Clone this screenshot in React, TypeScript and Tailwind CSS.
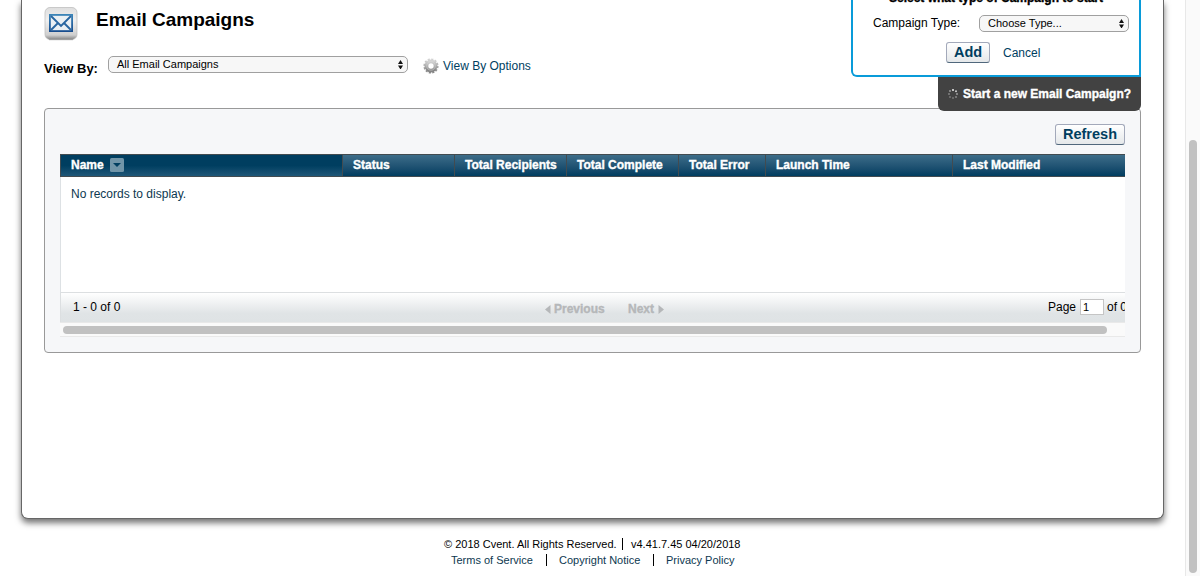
import React from 'react';

const columns = [
  { label: 'Status', box: 'w-28' },
  { label: 'Total Recipients', box: 'w-28' },
  { label: 'Total Complete', box: 'w-28' },
  { label: 'Total Error', box: 'w-[87px]' },
  { label: 'Launch Time', box: 'w-[187px]' },
  { label: 'Last Modified', box: 'w-[173px]' },
];

const heavy = 'font-bold [-webkit-text-stroke-width:0.35px]';

function Label({ children, className = '' }: { children: string; className?: string }) {
  return <span className={'block h-4 shrink-0 whitespace-nowrap leading-4 ' + className}>{children}</span>;
}

function SelectBox({ children, className }: { children: string; className: string }) {
  return (
    <div className={'flex h-[17px] shrink-0 items-center justify-between rounded-[5px] border border-[#a0a0a0] bg-[#f7f7f7] pl-2 pr-1 ' + className}>
      <Label className="-mt-px text-[11px]">{children}</Label>
      <svg width="5" height="9" viewBox="0 0 5 9"><path d="M2.5 0 5 4H0ZM0 5.5H5L2.5 9.5Z" fill="#111" /></svg>
    </div>
  );
}

function Button({ children, className }: { children: string; className: string }) {
  return (
    <button type="button" className={'flex h-[21px] justify-center rounded-[3px] border border-[#a3a9ba] border-b-[#50677c] bg-gradient-to-b from-white to-[#e5e8ea] pt-px text-[14.5px] font-bold text-[#003e5f] ' + className}>
      <Label>{children}</Label>
    </button>
  );
}

function EmailIcon() {
  return (
    <svg className="mt-[7px] shrink-0" width="34" height="34" viewBox="0 0 34 34">
      <defs>
        <linearGradient id="tile" x2="0" y2="1"><stop stopColor="#dedede" /><stop offset=".4" stopColor="#f0f0f0" /><stop offset=".86" stopColor="#cfcfcf" /><stop offset="1" stopColor="#858585" /></linearGradient>
        <linearGradient id="mail" x2="0" y2="1"><stop stopColor="#3c86b9" /><stop offset="1" stopColor="#174b8d" /></linearGradient>
      </defs>
      <rect x="1" y=".5" width="32" height="32" rx="5" fill="url(#tile)" stroke="#b9b9b9" strokeWidth=".7" />
      <path d="M5 32.7H29" stroke="#777" opacity=".5" />
      <path d="M5 7H29V25H5Z" fill="url(#mail)" />
      <path d="M6.8 8.8H27.2V23.2H6.8Z" fill="#eaf0f4" />
      <path d="m7 9 10 10L27 9M7 23l7-7M27 23l-7-7" fill="none" stroke="#2866a1" strokeWidth="1.9" />
    </svg>
  );
}

function Gear() {
  return (
    <svg width="16" height="16" viewBox="0 0 16 16" className="shrink-0">
      <defs><linearGradient id="gear" x2="0" y2="1"><stop stopColor="#d2d2d2" /><stop offset="1" stopColor="#858585" /></linearGradient></defs>
      <circle cx="8" cy="8" r="6.6" fill="none" stroke="url(#gear)" strokeWidth="2" strokeDasharray="2.1 1.356" />
      <circle cx="8" cy="8" r="4.6" fill="none" stroke="url(#gear)" strokeWidth="3.8" />
      <circle cx="8" cy="8" r="4.2" fill="none" stroke="#ddd" strokeWidth="1" opacity=".5" />
    </svg>
  );
}

function Spinner() {
  const dots = [[5, 1], [8, 2.2], [9, 5], [8, 8], [5, 9], [2, 8], [1, 5], [2, 2]];
  const shades = ['#eee', '#ccc', '#999', '#888', '#777', '#777', '#808080', '#999'];
  return <svg width="10" height="10" viewBox="0 0 10 10" className="mt-[3px] shrink-0">{dots.map(([x, y], i) => <circle key={i} cx={x} cy={y} r="1" fill={shades[i]} />)}</svg>;
}

function CampaignPopup() {
  return (
    <div className="absolute right-[22px] top-0 flex w-[290px] flex-col items-end">
      <div className="flex h-[77px] w-full flex-col overflow-hidden rounded-bl-[6px] border-2 border-t-0 border-[#099bd9] bg-white">
        <div className="-mt-[10px] flex justify-center"><Label className={'text-[12px] ' + heavy}>Select what type of Campaign to start</Label></div>
        <div className="mt-[9px] flex pl-5">
          <Label className="w-[88px] text-[12px]">Campaign Type:</Label>
          <SelectBox className="ml-[18px] w-[150px]">Choose Type...</SelectBox>
        </div>
        <div className="mt-[10px] flex pl-[93px]">
          <Button className="w-11">Add</Button>
          <Label className="ml-[13px] mt-[3px] text-[12px] text-[#003e5f]">Cancel</Label>
        </div>
      </div>
      <div className="flex h-[34px] w-[203px] rounded-b-[6px] bg-[#424242] pl-[10px] pt-[9px]">
        <Spinner /><Label className={'ml-[5px] text-[12px] text-white ' + heavy}>Start a new Email Campaign?</Label>
      </div>
    </div>
  );
}

function CampaignTable() {
  return (
    <div className="w-[1065px] overflow-hidden text-[12px]">
      <div className="flex h-[23px] border-y border-[#424b50] bg-gradient-to-b from-[#3d6d89] to-[#003d60] text-white">
        <div className="flex w-[282px] shrink-0 border-l border-[#424b50] bg-gradient-to-b from-[#003e60] from-50% to-[#1e5778] pl-[10px] pt-[2px]">
          <Label className={'w-[33px] ' + heavy}>Name</Label>
          <svg className="ml-[6px] mt-px" width="14" height="14" viewBox="0 0 14 14"><rect width="14" height="14" rx="1.5" fill="#7195a8" /><path d="M3 5h8L7 9Z" fill="#003e60" /></svg>
        </div>
        {columns.map(({ label, box }) => (
          <div key={label} className={'flex shrink-0 border-l border-[#424b50] pl-[10px] pt-[2px] ' + box}>
            <Label className={heavy}>{label}</Label>
          </div>
        ))}
      </div>
      <div className="h-[115px] border-l border-[#dde1e4] bg-white pl-[10px] pt-[9px]"><Label className="text-[#0d3850]">No records to display.</Label></div>
      <div className="flex h-[30px] border-l border-t border-[#dcdfe1] bg-gradient-to-b from-white via-[#e0e4e6] via-70% to-[#dfe3e5] pl-3 pt-[6px]">
        <Label className="w-[48px]">1 - 0 of 0</Label>
        <div className="ml-[424px] flex shrink-0 pt-[2px] font-bold text-[#b5b7b9]">
          <svg width="6" height="9" viewBox="0 0 6 9" className="mt-1"><path d="M5.5 0V9L0 4.5Z" fill="#b5b7b9" /></svg>
          <Label className="ml-[3px] w-[51px] [-webkit-text-stroke-width:0.35px]">Previous</Label>
          <Label className="ml-[23px] w-[27px] [-webkit-text-stroke-width:0.35px]">Next</Label>
          <svg width="6" height="9" viewBox="0 0 6 9" className="ml-[3px] mt-1"><path d="M.5 0V9L6 4.5Z" fill="#b5b7b9" /></svg>
        </div>
        <Label className="ml-[384px] w-[28px]">Page</Label>
        <div className="ml-[4px] h-4 w-6 shrink-0 border border-[#c5c5c5] bg-white pl-[2px]"><Label className="-mt-px text-[11px]">1</Label></div>
        <Label className="ml-[3px]">of 0</Label>
      </div>
      <div className="h-[15px] border-y border-[#e9e9e9] bg-[#fafafa] pl-[3px] pt-[3px]"><div className="h-2 w-[1044px] rounded-full bg-[#c1c1c1]" /></div>
    </div>
  );
}

export default function App() {
  return (
    <div className="flex h-[576px] w-[1200px] overflow-hidden bg-white font-['Liberation_Sans',sans-serif] text-black">
      <main className="flex w-[1185px] flex-col">
        <div className="relative ml-[21px] h-[519px] w-[1143px] shrink-0 rounded-b-[7px] border border-t-0 border-[#666] bg-white px-[22px] shadow-[0_4px_6px_rgba(0,0,0,.55)]">
          <div className="flex h-[56px]"><EmailIcon /><h1 className="ml-[18px] mt-[12px] whitespace-nowrap text-[19px] font-bold leading-4">Email Campaigns</h1></div>
          <div className="flex h-[52px]">
            <Label className="mt-[5px] w-[54px] text-[13px] font-bold">View By:</Label>
            <SelectBox className="ml-[10px] w-[300px]">All Email Campaigns</SelectBox>
            <div className="ml-[15px] mt-[2px] flex"><Gear /><Label className="ml-1 text-[12px] text-[#003e5f]">View By Options</Label></div>
          </div>
          <section className="flex h-[245px] flex-col rounded-[4px] border border-[#999] bg-[#f6f7f9] px-[15px] pt-[15px]">
            <div className="flex h-[30px] justify-end"><Button className="w-[70px]">Refresh</Button></div>
            <CampaignTable />
          </section>
          <CampaignPopup />
        </div>
        <footer className="mt-[17px] text-[11px]">
          <div className="flex pl-[444px]"><Label className="w-[173px]">© 2018 Cvent. All Rights Reserved.</Label><span className="ml-[5px] mt-[2px] h-3 w-px bg-black" /><Label className="ml-[8px]">v4.41.7.45 04/20/2018</Label></div>
          <div className="flex pl-[451px] text-[#0d3850]"><Label className="w-[82px]">Terms of Service</Label><span className="ml-[13px] mt-[2px] h-3 w-px bg-black" /><Label className="ml-[12px] w-[81px]">Copyright Notice</Label><span className="ml-[13px] mt-[2px] h-3 w-px bg-black" /><Label className="ml-[12px]">Privacy Policy</Label></div>
        </footer>
      </main>
      <div className="flex w-[15px] justify-center border-l border-[#e8e8e8] bg-[#fafafa] pt-[140px]"><div className="h-[433px] w-2 rounded-full bg-[#c1c1c1]" /></div>
    </div>
  );
}
